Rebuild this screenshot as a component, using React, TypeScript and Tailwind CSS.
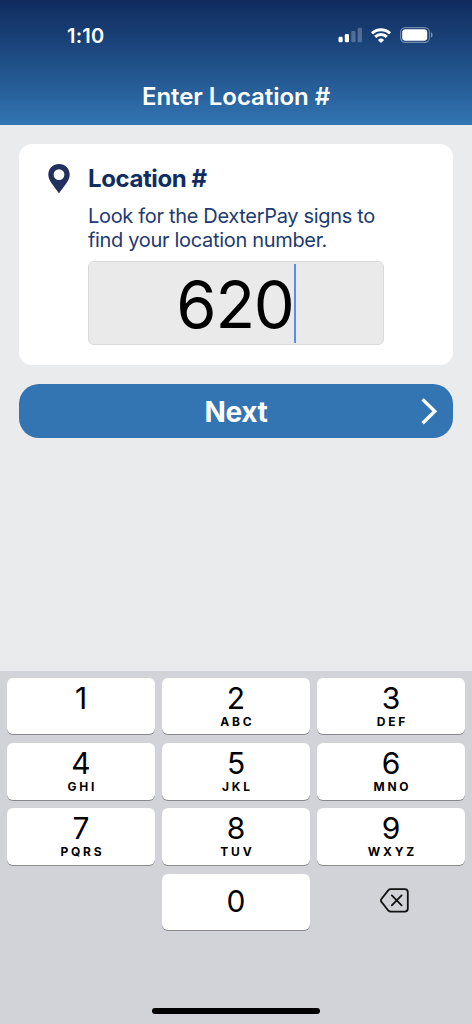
import { useState } from "react";

const KEYS = [
  { digit: "1", letters: "" },
  { digit: "2", letters: "ABC" },
  { digit: "3", letters: "DEF" },
  { digit: "4", letters: "GHI" },
  { digit: "5", letters: "JKL" },
  { digit: "6", letters: "MNO" },
  { digit: "7", letters: "PQRS" },
  { digit: "8", letters: "TUV" },
  { digit: "9", letters: "WXYZ" },
];

const KEY_CLASS = "h-full w-full bg-white rounded-[6px] shadow-[0_1px_0_#898a8d] text-black";

function StatusIcons() {
  return (
    <div className="flex items-center text-white">
      <svg width="24" height="16" viewBox="0 0 24 16" fill="currentColor">
        <rect x="0.5" y="9.7" width="4.2" height="5.6" rx="1.2" />
        <rect x="6.8" y="7" width="4.2" height="8.3" rx="1.2" />
        <rect x="13.3" y="4" width="4.2" height="11.3" rx="1.2" opacity="0.25" />
        <rect x="19.7" y="0.7" width="4.2" height="14.6" rx="1.2" opacity="0.25" />
      </svg>
      <svg className="ml-[9px]" width="20" height="15" viewBox="0 0 20 15" fill="none" stroke="currentColor" strokeWidth="3">
        <path d="M1 5.3a13 13 0 0 1 18 0" />
        <path d="M4.2 8.9a8.3 8.3 0 0 1 11.6 0" />
        <path d="M10 15 6.9 11.9a4.4 4.4 0 0 1 6.2 0z" fill="currentColor" stroke="none" />
      </svg>
      <svg className="ml-[9px]" width="34" height="16" viewBox="0 0 34 16">
        <rect x="0.6" y="0.6" width="28.8" height="14.8" rx="4.6" fill="none" stroke="white" strokeOpacity="0.4" strokeWidth="1.1" />
        <rect x="2.2" y="2.2" width="25" height="11.6" rx="3.2" fill="white" />
        <path d="M31 5.3v5.2c1-.4 1.6-1.4 1.6-2.6s-.6-2.2-1.6-2.6z" fill="white" opacity="0.45" />
      </svg>
    </div>
  );
}

export default function App() {
  const [value, setValue] = useState("620");

  return (
    <div className="w-[472px] h-[1024px] flex flex-col overflow-hidden bg-[#eaebed] font-['Inter',sans-serif]">
      {/* Header */}
      <header className="h-[125px] shrink-0 bg-linear-to-b from-[#102b5e] to-[#3275b2] text-white">
        <div className="h-[70px] flex items-center justify-between pl-[67px] pr-[38px]">
          <span className="pt-[1px] text-[20px] leading-[24px] font-semibold tracking-[0.2px]">1:10</span>
          <StatusIcons />
        </div>
        <h1 className="pt-[11px] text-center text-[24px] leading-[32px] font-semibold tracking-[-0.05px]">Enter Location #</h1>
      </header>

      <main className="flex-1 px-[19px] pt-[19px]">
        {/* Location card */}
        <section className="h-[221px] flex bg-white rounded-[13px] pt-[19px]">
          <div className="w-[69px] shrink-0 pl-[28.5px] pt-[1px]">
            <svg width="22" height="30" viewBox="0 0 22 30" fill="#22305f">
              <path fillRule="evenodd" d="M11 0C4.9 0 .3 4.6.3 10.6.3 17.4 6.4 22.3 11 29.6 15.6 22.3 21.7 17.4 21.7 10.6 21.7 4.6 17.1 0 11 0zm0 5.2a5.4 5.4 0 1 1 0 10.8 5.4 5.4 0 0 1 0-10.8z" />
            </svg>
          </div>
          <div>
            <h2 className="text-[24px] leading-[32px] font-bold tracking-[-0.4px] text-[#0f2d62]">Location #</h2>
            <p className="mt-[9px] text-[20px] leading-[24px] tracking-[-0.32px] whitespace-nowrap text-[#1d3a72]">
              Look for the DexterPay signs to
              <br />
              find your location number.
            </p>
            <div className="mt-[9px] w-[296px] h-[84px] flex items-center justify-center bg-[#eaeaea] border border-[#d9d9d9] rounded-[6px]">
              <span className="pt-[3px] text-[65px] leading-[78px] tracking-[-1.2px] text-black">{value}</span>
              <span className="w-[2px] h-[79px] bg-[#5a8cf0]" />
            </div>
          </div>
        </section>

        <button className="relative mt-[19px] h-[54px] w-full flex items-center justify-center bg-[#3375b3] rounded-[20px] text-white">
          <span className="pt-[2px] text-[28px] leading-[32px] font-bold tracking-[-0.4px]">Next</span>
          <svg className="absolute right-[15px] top-[14px]" width="17" height="27" viewBox="0 0 17 27" fill="none" stroke="currentColor" strokeWidth="3.4">
            <path d="M1.6 1.4 13.8 13.3 1.6 25.2" />
          </svg>
        </button>
      </main>

      {/* Number pad */}
      <div className="h-[353px] shrink-0 flex flex-col bg-[#d1d3d9] px-[7px] pt-[7px]">
        <div className="grid grid-cols-3 grid-rows-[56px_57px_57px_56px] gap-x-[7px] gap-y-[8.5px]">
          {KEYS.map(({ digit, letters }) => (
            <button key={digit} className={KEY_CLASS} onClick={() => setValue(v => v + digit)}>
              <span className="flex flex-col items-center h-full pt-[7px]">
                <span className="h-[30px] text-[30px] leading-[26px]">{digit}</span>
                {letters && (
                  <span className="text-[12px] leading-[14px] font-bold tracking-[2.8px] pl-[2.8px]">{letters}</span>
                )}
              </span>
            </button>
          ))}
          <button className={`${KEY_CLASS} col-start-2`} onClick={() => setValue(v => v + "0")}>
            <span className="text-[30px] leading-[30px]">0</span>
          </button>
          <button className="flex items-center justify-center pl-[6px] pb-[3px]" onClick={() => setValue(v => v.slice(0, -1))}>
            <svg width="29" height="25" viewBox="0 0 29 25" fill="none" stroke="#111" strokeWidth="1.8" strokeLinecap="round" strokeLinejoin="round">
              <path d="M10.6 1.2h14.2a3 3 0 0 1 3 3v16.4a3 3 0 0 1-3 3H10.6a3 3 0 0 1-2.2-.9L1.6 14a2.2 2.2 0 0 1 0-3.2l6.8-8.7a3 3 0 0 1 2.2-.9z" />
              <path d="m11.8 7.4 9.8 10M21.6 7.4l-9.8 10" />
            </svg>
          </button>
        </div>
        <div className="mt-auto mb-[10px] mx-auto w-[168px] h-[6px] rounded-full bg-black" />
      </div>
    </div>
  );
}
